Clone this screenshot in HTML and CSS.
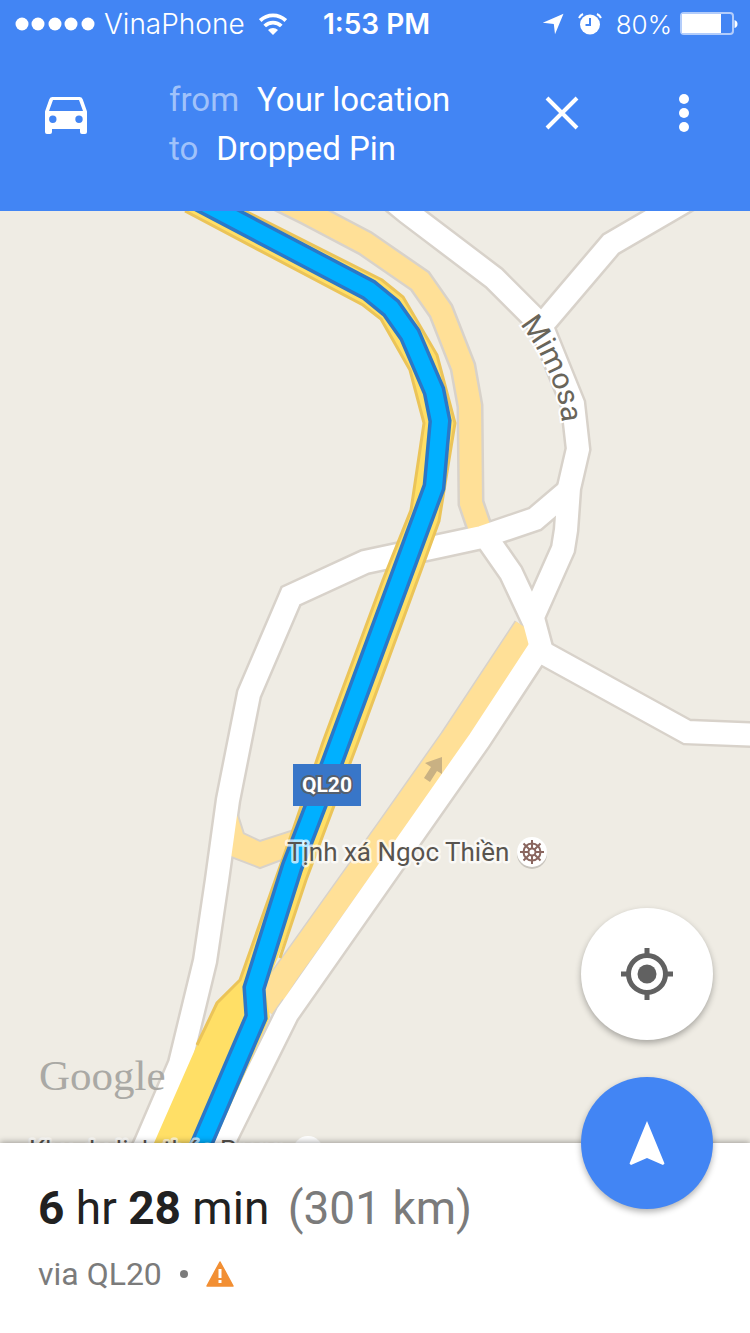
FILE: index.html
```
<!DOCTYPE html>
<html lang="en">
	<head>
		<meta charset="UTF-8">
		<meta name="viewport" content="width=device-width">
		<title>Directions</title>
		<link rel="stylesheet" href="styles.css">
	</head>
	<body>
		<header class="header">
			<div class="status">
				<div class="status-left">
					<svg width="80" height="14" viewBox="0 0 80 14" fill="#fff">
						<circle cx="7" cy="7" r="6.5"/><circle cx="23" cy="7" r="6.5"/><circle cx="40" cy="7" r="6.5"/><circle cx="56" cy="7" r="6.5"/><circle cx="73" cy="7" r="6.5"/>
					</svg>
					<span class="carrier">VinaPhone</span>
					<svg class="wifi" width="28" height="22" viewBox="0 0 28 22" fill="none" stroke="#fff" stroke-width="3.8">
						<path d="M1.2 7.6a18.4 18.4 0 0 1 25.6 0"/>
						<path d="M5.7 13a12 12 0 0 1 16.600 0"/>
						<path d="M14 22l-5-5a7.200 7.200 0 0 1 10 0z" fill="#fff" stroke="none"/>
					</svg>
				</div>
				<time class="clock">1:53 PM</time>
				<div class="status-right">
					<svg width="22" height="22" viewBox="0 0 22 22" fill="#fff"><path d="M21.500.8L13 21.200l-1.200-10.300L.8 9.800z"/></svg>
					<svg class="alarm" width="24" height="22" viewBox="0 0 24 22">
						<circle cx="12" cy="11.500" r="10" fill="#fff"/>
						<path d="M1 5a9 9 0 0 1 4-4M23 5a9 9 0 0 0-4-4" fill="none" stroke="#fff" stroke-width="2"/>
						<path d="M12 5v7H7.500" fill="none" stroke="#4285f4" stroke-width="2"/>
					</svg>
					<span class="percent">80%</span>
					<svg width="58" height="24" viewBox="0 0 58 24">
						<rect x="1" y="1" width="52" height="21" rx="3" fill="none" stroke="#b3cdfb" stroke-width="2"/>
						<path d="M2 2h39v19H2z" fill="#fff"/>
						<path d="M54.500 8q3 1 3 4t-3 4z" fill="#fff"/>
					</svg>
				</div>
			</div>
			<div class="bar">
				<button class="icon-btn mode" aria-label="Driving">
					<svg width="44" height="40" viewBox="0 0 44 40" fill="#fff">
						<path fill-rule="evenodd" d="M8.500 1h27a3.500 3.500 0 0 1 3.200 2.300L43 15.500V36a2 2 0 0 1-2 2h-3a2 2 0 0 1-2-2v-3H8v3a2 2 0 0 1-2 2H3a2 2 0 0 1-2-2V15.500L5.300 3.300A3.500 3.500 0 0 1 8.500 1zM9 4L5 15h34L35 4zM8.800 19.500a3.700 3.700 0 1 0 0 7.400 3.700 3.700 0 0 0 0-7.400zM35 19.500a3.700 3.700 0 1 0 0 7.400 3.700 3.700 0 0 0 0-7.400z"/>
					</svg>
				</button>
				<div class="route">
					<p><span class="way">from</span>Your location</p>
					<p><span class="way">to</span>Dropped Pin</p>
				</div>
				<button class="icon-btn close" aria-label="Close">
					<svg width="34" height="34" viewBox="0 0 34 34" stroke="#fff" stroke-width="4"><path d="M2 2l30 30M32 2L2 32"/></svg>
				</button>
				<button class="icon-btn more" aria-label="More">
					<svg width="12" height="40" viewBox="0 0 12 40" fill="#fff"><circle cx="6" cy="6" r="5"/><circle cx="6" cy="20" r="5"/><circle cx="6" cy="34" r="5"/></svg>
				</button>
			</div>
		</header>

		<main class="map">
			<svg class="map-canvas" viewBox="0 211 750 932" role="img" aria-label="Map">
				<defs>
					<g id="white-roads">
						<path d="M374 185L407 212L494 278L541 325L573 404L578 449L569 488L566 530L563 549L531 621"/>
						<path d="M721 180L666 212L611 244L543 324"/>
						<path d="M569 490L535 519L482 537L440 546L365 562L291 596L249 694L228 800L217 880L205 961L180 1064L146 1143L129 1180"/>
						<path d="M488 540L511 573L534 622L542 652"/>
						<path d="M538 650L687 732L760 735"/>
						<path d="M538 650L479 740L287 1014L224 1141L204 1180"/>
					</g>
					<path id="pale-road" d="M252 185L306 212L365 243L420 281L441 311L463 367L470 406L471 503L482 535"/>
					<path id="pale-ramp" d="M526 628L452 740L390 828L303 950L262 1007"/>
					<path id="pale-link" d="M236 812L243 834L260 842L300 829L292 855L260 867L226 854z"/>
					<path id="route" d="M162 181L219 211L369 290L391 308L410 335L434 391L440 421L434 487L332 763L292 867L254 988L256 1017L202 1143L190 1170"/>
					<path id="mimosa" d="M520 324L534 344Q548 368 556 392Q562 408 563 440"/>
				</defs>

				<rect y="211" width="750" height="932" fill="#efece4"/>

				<!-- road edges -->
				<g class="road" stroke="#d8d2ca" stroke-width="27">
					<use href="#white-roads"/>
					<use href="#pale-road"/>
					<use href="#pale-ramp"/>
				</g>
				<use href="#pale-link" fill="#ffe097" stroke="#d8d2ca" stroke-width="4"/>
				<!-- road surfaces -->
				<use href="#pale-road" class="road" stroke="#ffe097" stroke-width="22"/>
				<use href="#pale-ramp" class="road" stroke="#ffe097" stroke-width="24"/>
				<path d="M400 828L318 944L284 1000L268 990L300 940L390 820z" fill="#ffe097"/>
				<use href="#pale-link" fill="#ffe097"/>
				<use href="#white-roads" class="road" stroke="#fff" stroke-width="22"/>

				<!-- highway -->
				<path fill="#ffdf66" d="M185 211L363 305L381 319L410 370L424 423L411 510L383 580L323 742L293 830L240 980L217 1003L197 1045L154 1143H214L270 1017L265 988L283 945L306 880L358 742L423 565L439 521L455 423L437 355L403 297L382 280L245 211z"/>
				<g fill="none" stroke="#ebc459" stroke-width="3">
					<path d="M185 211L363 305L381 319L410 370L424 423L411 510L383 580L323 742L293 830L240 980L217 1003L197 1045"/>
					<path d="M245 211L382 280L403 297L437 355L455 423L439 521L423 565L358 742L306 880L280 958"/>
				</g>

				<use href="#route" class="road" stroke="#2a78c8" stroke-width="23"/>
				<use href="#route" class="road" stroke="#00b0ff" stroke-width="16"/>

				<path d="M442 757v17l-5-3-7 11-6-4 7-11-6-4z" fill="#c9b183"/>

				<rect x="293" y="764" width="68" height="42" fill="#3876c8"/>
				<text class="shield" x="327" y="792">QL20</text>
				<text class="street"><textPath href="#mimosa">Mimosa</textPath></text>
				<text class="place" x="287" y="861">Tịnh xá Ngọc Thiền</text>
				<text class="place" x="29" y="1159">Khu du lịch thác Prenn</text>
				<circle cx="308" cy="1151" r="15" fill="#fff"/>

				<circle cx="532" cy="854" r="15" fill="#c9c5be"/>
				<circle cx="532" cy="852" r="15" fill="#fff"/>
				<g fill="none" stroke="#8a665f" stroke-width="2">
					<circle cx="532" cy="852" r="8.500"/>
					<circle cx="532" cy="852" r="3.500"/>
					<path d="M532 840v8.500M532 855.500v8.500M520 852h8.500M535.500 852h8.500M523.500 843.500l6 6M534.500 854.500l6 6M540.500 843.500l-6 6M529.500 854.500l-6 6"/>
				</g>
				<text class="logo" x="39" y="1090">Google</text>
			</svg>

			<div class="fabs">
				<button class="fab" aria-label="My location">
					<svg width="52" height="52" viewBox="0 0 52 52" stroke="#616161" stroke-width="5" fill="none">
						<circle cx="26" cy="26" r="18.500"/>
						<circle cx="26" cy="26" r="9.500" fill="#616161" stroke="none"/>
						<path d="M26 0v8M26 44v8M0 26h8M44 26h8"/>
					</svg>
				</button>
				<button class="fab fab-start" aria-label="Start navigation">
					<svg width="36" height="44" viewBox="0 0 36 44" fill="#fff"><path d="M18 0l17.500 42.500-1.500 1.500-16-7-16 7-1.500-1.500z"/></svg>
				</button>
			</div>
		</main>

		<section class="sheet">
			<h1 class="time"><b>6</b> hr <b>28</b> min <span class="distance">(301 km)</span></h1>
			<p class="via">via QL20
				<span class="dot"></span>
				<svg width="28" height="26" viewBox="0 0 28 26" role="img" aria-label="Warning">
					<path d="M14 1L27 25H1z" fill="#f28f33" stroke="#f28f33" stroke-width="1.500" stroke-linejoin="round"/>
					<path d="M12.500 8h3v9h-3zM12.500 19h3v3h-3z" fill="#fff"/>
				</svg>
			</p>
		</section>
	</body>
</html>
```
FILE: styles.css
```
*{margin: 0;padding: 0;box-sizing: border-box;}
body{min-height: 100vh;display: flex;flex-direction: column;background: #fff;font-family: Roboto, "Noto Sans", sans-serif;}
svg{display: block;flex: none;}
button{border: 0;background: none;cursor: pointer;}

.header{background: #4285f4;color: #fff;padding-bottom: 38px;}
.status{display: grid;grid-template-columns: 1fr auto 1fr;align-items: center;height: 48px;padding: 0 12px 0 15px;font-family: Inter, "Liberation Sans", sans-serif;font-size: 26px;}
.status-left, .status-right{display: flex;align-items: center;}
.status-right{justify-content: flex-end;}
.carrier{margin: 0 14px 0 9px;font-size: 28px;font-weight: 300;}
.clock{font-size: 28px;font-weight: 600;}
.alarm{margin: 0 14px;}
.percent{margin-right: 8px;font-weight: 300;}

.bar{display: flex;align-items: flex-start;padding: 27px 60px 0 44px;}
.icon-btn{display: flex;align-items: center;height: 76px;}
.mode{margin-right: 81px;padding-top: 5px;}
.close{margin-right: 99px;}
.route{flex: 1;font-size: 33px;line-height: 49px;}
.way{color: #a0c2fa;margin-right: 18px;}

.map{flex: 1;position: relative;}
.map-canvas{width: 100%;height: auto;}
.road{fill: none;stroke-linejoin: miter;}
.shield{font-size: 21px;font-weight: bold;text-anchor: middle;fill: #fff;stroke: #55606e;stroke-width: 4px;paint-order: stroke;}
.street{font-size: 30px;fill: #69655a;stroke: #fff;stroke-width: 4px;paint-order: stroke;}
.place{font-size: 26px;fill: #58544f;stroke: rgba(255,255,255,.7);stroke-width: 5px;stroke-linejoin: round;paint-order: stroke;}
.logo{font-family: "Liberation Serif", serif;font-size: 43px;fill: #aaa9a5;}

/* the start button straddles the edge of the sheet */
.fabs{position: absolute;right: 37px;bottom: -66px;z-index: 2;display: grid;gap: 37px;}
.fab{display: flex;align-items: center;justify-content: center;width: 132px;height: 132px;border-radius: 50%;background: #fff;box-shadow: 0 3px 6px rgba(0,0,0,.3);}
.fab-start{background: #4285f4;}

.sheet{position: relative;background: #fff;padding: 37px 38px 39px;box-shadow: 0 -1px 6px rgba(0,0,0,.35);}
.time{font-size: 46px;line-height: 56px;font-weight: normal;color: #212121;}
.distance{color: #7b7b7b;margin-left: 7px;}
.via{display: flex;align-items: center;margin-top: 18px;font-size: 32px;line-height: 40px;color: #7b7b7b;}
.dot{width: 8px;height: 8px;border-radius: 50%;background: #7b7b7b;margin: 0 18px;}
```
